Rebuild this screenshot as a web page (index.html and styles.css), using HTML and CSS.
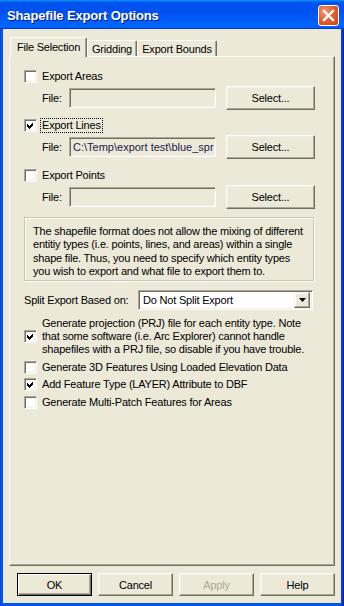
FILE: index.html
```html
<!DOCTYPE html>
<html>
<head>
<meta charset="utf-8">
<link rel="stylesheet" href="styles.css">
</head>
<body>
<div class="window">
  <div class="titlebar">
    <span class="title">Shapefile Export Options</span>
    <div class="close">
      <svg width="19" height="19" viewBox="0 0 19 19"><path d="M5 5 L14 14 M14 5 L5 14" stroke="#fff" stroke-width="2.4" stroke-linecap="square"/></svg>
    </div>
  </div>
  <div class="client">
    <div class="tabs">
      <div class="tab active">File Selection</div>
      <div class="tab t-grid">Gridding</div>
      <div class="tab t-bounds">Export Bounds</div>
    </div>
    <div class="panel">
      <div class="cbrow r-areas"><span class="cb"></span><span class="lbl">Export Areas</span></div>
      <div class="filerow r-f1"><span class="flabel">File:</span><div class="edit"></div><div class="btn sel">Select...</div></div>

      <div class="cbrow r-lines"><span class="cb"><svg width="7" height="7" viewBox="0 0 7 7"><path d="M0 2 L2 4 L6 0 L6 3 L2 7 L0 5 Z" fill="#000"/></svg></span><span class="lbl focus">Export Lines</span></div>
      <div class="filerow r-f2"><span class="flabel">File:</span><div class="edit"><span class="val">C:\Temp\export test\blue_spr</span></div><div class="btn sel">Select...</div></div>

      <div class="cbrow r-points"><span class="cb"></span><span class="lbl">Export Points</span></div>
      <div class="filerow r-f3"><span class="flabel">File:</span><div class="edit"></div><div class="btn sel">Select...</div></div>

      <div class="info">The shapefile format does not allow the mixing of different<br>entitiy types (i.e. points, lines, and areas) within a single<br>shape file. Thus, you need to specify which entity types<br>you wish to export and what file to export them to.</div>

      <div class="comborow">
        <span class="clabel">Split Export Based on:</span>
        <div class="combo"><span class="cval">Do Not Split Export</span><span class="cbtn"><svg width="7" height="4" viewBox="0 0 7 4"><path d="M0 0 H7 L3.5 4 Z" fill="#000"/></svg></span></div>
      </div>

      <div class="cbrow multi r-prj"><span class="cb"><svg width="7" height="7" viewBox="0 0 7 7"><path d="M0 2 L2 4 L6 0 L6 3 L2 7 L0 5 Z" fill="#000"/></svg></span><span class="lbl">Generate projection (PRJ) file for each entity type. Note<br>that some software (i.e. Arc Explorer) cannot handle<br>shapefiles with a PRJ file, so disable if you have trouble.</span></div>
      <div class="cbrow r-3d"><span class="cb"></span><span class="lbl">Generate 3D Features Using Loaded Elevation Data</span></div>
      <div class="cbrow r-af"><span class="cb"><svg width="7" height="7" viewBox="0 0 7 7"><path d="M0 2 L2 4 L6 0 L6 3 L2 7 L0 5 Z" fill="#000"/></svg></span><span class="lbl">Add Feature Type (LAYER) Attribute to DBF</span></div>
      <div class="cbrow r-mp"><span class="cb"></span><span class="lbl">Generate Multi-Patch Features for Areas</span></div>
    </div>
    <div class="buttons">
      <div class="btn bb default">OK</div>
      <div class="btn bb">Cancel</div>
      <div class="btn bb disabled">Apply</div>
      <div class="btn bb">Help</div>
    </div>
  </div>
</div>
</body>
</html>
```
FILE: styles.css
```css
* { box-sizing: border-box; }
html, body { margin: 0; padding: 0; background: #fff; }
body {
  font-family: "Liberation Sans", Arial, sans-serif;
  font-size: 11px;
  letter-spacing: -0.2px;
  color: #000;
}
.window {
  width: 344px;
  height: 606px;
  display: flex;
  flex-direction: column;
  background: linear-gradient(to right, #0831D9 0, #0A5AEE 1px, #0055EA 3px, #0055EA 340px, #0A3FD0 342px, #001EA0 344px);
}
.titlebar {
  height: 29px;
  flex: none;
  position: relative;
  display: flex;
  align-items: center;
  padding-left: 7px;
  background: linear-gradient(to bottom, #0997ff 0, #0053ee 8%, #0050ee 40%, #0066ff 88%, #0066ff 93%, #005bff 95%, #003dd7 96%, #003dd7 100%);
}
.title {
  color: #fff;
  font-weight: bold;
  font-size: 13px;
  letter-spacing: -0.15px;
  text-shadow: 1px 1px #0A1883;
  margin-top: 1px;
}
.close {
  position: absolute;
  left: 318px;
  top: 5px;
  width: 21px;
  height: 21px;
  border: 1px solid #fff;
  border-radius: 3px;
  background: radial-gradient(circle at 30% 30%, #F3987A 0, #E5612F 45%, #CC4314 100%);
  display: flex;
  align-items: center;
  justify-content: center;
}
.close svg { display: block; }
.client {
  flex: 1;
  margin: 0 3px 3px 3px;
  background: #ECE9D8;
  padding: 8px 6px 0 6px;
  display: flex;
  flex-direction: column;
}
.tabs {
  height: 19px;
  display: flex;
  align-items: flex-end;
  padding-left: 1px;
  position: relative;
  z-index: 2;
}
.tab {
  height: 16px;
  border-top: 1px solid #fff;
  border-left: 1px solid #fff;
  border-right: 1px solid #716F64;
  box-shadow: inset -1px 0 #ACA899;
  border-radius: 2px 2px 0 0;
  display: flex;
  align-items: center;
  justify-content: center;
  padding-top: 1px;
  background: #ECE9D8;
}
.tab.active {
  width: 77px;
  height: 20px;
  margin-bottom: -1px;
  padding-bottom: 2px;
}
.t-grid { width: 50px; }
.t-bounds { width: 80px; }
.panel {
  height: 510px;
  flex: none;
  border-top: 1px solid #fff;
  border-left: 1px solid #fff;
  border-right: 1px solid #716F64;
  border-bottom: 1px solid #716F64;
  box-shadow: inset -1px -1px #ACA899;
  padding: 13px 0 0 14px;
  display: flex;
  flex-direction: column;
  align-items: flex-start;
}
.cbrow {
  display: flex;
  align-items: center;
  height: 13px;
}
.cbrow.multi { height: 39px; }
.cb {
  width: 13px;
  height: 13px;
  flex: none;
  background: #fff;
  border-top: 1px solid #ACA899;
  border-left: 1px solid #ACA899;
  border-right: 1px solid #fff;
  border-bottom: 1px solid #fff;
  box-shadow: inset 1px 1px #716F64, inset -1px -1px #F1EFE2;
  display: flex;
  align-items: center;
  justify-content: center;
}
.cb svg { display: block; shape-rendering: crispEdges; }
.lbl {
  margin-left: 4px;
  padding: 0 1px;
  line-height: 13px;
  white-space: nowrap;
}
.lbl.focus { outline: 1px dotted #000; outline-offset: 0; }
.r-lines { margin-top: 9px; }
.r-points { margin-top: 10px; }
.filerow {
  display: flex;
  align-items: center;
  height: 24px;
  margin-top: 3px;
  padding-left: 18px;
}
.flabel { width: 27px; }
.edit {
  width: 147px;
  height: 20px;
  border-top: 1px solid #ACA899;
  border-left: 1px solid #ACA899;
  border-right: 1px solid #fff;
  border-bottom: 1px solid #fff;
  box-shadow: inset 1px 1px #716F64, inset -1px -1px #F1EFE2;
  background: #ECE9D8;
  overflow: hidden;
  white-space: nowrap;
  padding: 3px 0 0 3px;
  line-height: 13px;
}
.val { color: #1A1A50; letter-spacing: 0; }
.btn {
  display: flex;
  align-items: center;
  justify-content: center;
  background: #ECE9D8;
  border: 1px solid;
  border-color: #fff #716F64 #716F64 #fff;
  box-shadow: inset -1px -1px #ACA899, inset 1px 1px #F1EFE2;
}
.sel {
  width: 89px;
  height: 24px;
  margin-left: 10px;
}
.info {
  margin-top: 8px;
  width: 290px;
  height: 64px;
  border: 1px solid #C9C6B6;
  box-shadow: inset 1px 1px #fff, 1px 1px #fff;
  padding: 7px 0 0 8px;
  line-height: 13.3px;
  white-space: nowrap;
}
.comborow {
  margin-top: 9px;
  display: flex;
  align-items: center;
  height: 20px;
}
.clabel { width: 114px; }
.combo {
  width: 175px;
  height: 20px;
  background: #fff;
  border-top: 1px solid #ACA899;
  border-left: 1px solid #ACA899;
  border-right: 1px solid #fff;
  border-bottom: 1px solid #fff;
  box-shadow: inset 1px 1px #716F64, inset -1px -1px #F1EFE2;
  display: flex;
  align-items: center;
  padding: 1px 2px 2px 4px;
}
.cval { flex: 1; }
.cbtn {
  width: 16px;
  height: 16px;
  background: #ECE9D8;
  border: 1px solid;
  border-color: #F1EFE2 #716F64 #716F64 #F1EFE2;
  box-shadow: inset -1px -1px #ACA899, inset 1px 1px #fff;
  display: flex;
  align-items: center;
  justify-content: center;
}
.cbtn svg { display: block; }
.r-prj { margin-top: 7px; }
.r-prj .lbl { margin-left: 4px; }
.r-3d { margin-top: 5px; }
.r-af { margin-top: 4px; }
.r-mp { margin-top: 5px; }
.buttons {
  margin-top: 7px;
  display: flex;
  gap: 6px;
  padding-left: 8px;
}
.bb {
  width: 75px;
  height: 23px;
}
.bb.default {
  border: 1px solid #000;
  box-shadow: inset 1px 1px #fff, inset -1px -1px #716F64, inset -2px -2px #ACA899;
}
.bb.disabled { color: #ACA899; text-shadow: none; }
```
